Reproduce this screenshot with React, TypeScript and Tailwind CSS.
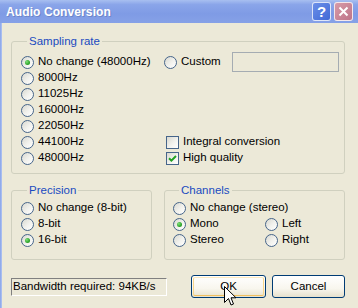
import React from "react";

function Radio({ checked = false }: { checked?: boolean }) {
  return (
    <span className="relative inline-flex h-[13px] w-[13px] shrink-0 items-center justify-center rounded-full border border-[#46658a] bg-[linear-gradient(135deg,#d8d8d0_0%,#f2f2ee_55%,#ffffff_100%)]">
      {checked && (
        <span className="h-[5px] w-[5px] rounded-full bg-[radial-gradient(circle_at_35%_35%,#7fe07a_0%,#2fa52c_60%,#1b8a1b_100%)]" />
      )}
    </span>
  );
}

function Check({ checked = false }: { checked?: boolean }) {
  return (
    <span className="inline-flex h-[13px] w-[13px] shrink-0 items-center justify-center border border-[#46658a] bg-[linear-gradient(135deg,#d8d8d0_0%,#f2f2ee_55%,#ffffff_100%)]">
      {checked && (
        <svg width="9" height="9" viewBox="0 0 9 9">
          <path d="M1 4.2 L3.4 6.6 L8 2" fill="none" stroke="#21a121" strokeWidth="2" />
        </svg>
      )}
    </span>
  );
}

function RadioRow({ label, checked = false }: { label: string; checked?: boolean }) {
  return (
    <div className="flex h-[16px] items-center gap-[4px]">
      <Radio checked={checked} />
      <span className="whitespace-nowrap">{label}</span>
    </div>
  );
}

function CheckRow({ label, checked = false }: { label: string; checked?: boolean }) {
  return (
    <div className="flex h-[16px] items-center gap-[4px] pl-[2px]">
      <Check checked={checked} />
      <span className="whitespace-nowrap">{label}</span>
    </div>
  );
}

function Group({ title, className, children }: { title: string; className: string; children: React.ReactNode }) {
  return (
    <fieldset className={"rounded-[3px] border border-[#d0d0bf] " + className}>
      <legend className="ml-[6px] px-[2px] leading-[14px] text-[#1a4bc0]">{title}</legend>
      {children}
    </fieldset>
  );
}

export default function App() {
  return (
    <div
      className="flex h-[308px] w-[358px] flex-col overflow-hidden bg-[#ece9d8] text-[11.5px] text-black"
      style={{ fontFamily: '"Liberation Sans", Arial, sans-serif' }}
    >
      {/* Title bar */}
      <div className="flex h-[23px] shrink-0 items-center justify-between bg-[linear-gradient(180deg,#a8bff0_0%,#8aa5e9_20%,#7f9be5_60%,#86a1e7_100%)] pl-[6px] pr-[5px]">
        <span className="text-[12px] font-bold tracking-[0.1px] text-white [text-shadow:1px_1px_0_#6d86c9]">
          Audio Conversion
        </span>
        <div className="flex items-center gap-[3px]">
          <div className="flex h-[19px] w-[19px] items-center justify-center rounded-[3px] border border-white/80 bg-[linear-gradient(135deg,#6b8fe8_0%,#4069d6_100%)] text-[15px] font-bold leading-none text-white">
            ?
          </div>
          <div className="flex h-[19px] w-[19px] items-center justify-center rounded-[3px] border border-white/80 bg-[linear-gradient(135deg,#d79aa8_0%,#be7589_100%)]">
            <svg width="11" height="11" viewBox="0 0 11 11">
              <path d="M1.5 1.5 L9.5 9.5 M9.5 1.5 L1.5 9.5" stroke="white" strokeWidth="2" />
            </svg>
          </div>
        </div>
      </div>

      {/* Body */}
      <div className="flex flex-1">
        <div className="w-[4px] bg-[linear-gradient(90deg,#8aa5e9_0%,#9db4ee_60%,#b9cbf3_100%)]" />
        <div className="flex flex-1 flex-col pl-[9px] pr-[13px] pt-[11px]">
          {/* Sampling rate */}
          <Group title="Sampling rate" className="h-[140px] pl-[9px] pr-[5px] pt-[6px]">
            <div className="grid grid-cols-[143px_1fr]">
              <div className="flex flex-col">
                <RadioRow label="No change (48000Hz)" checked />
                <RadioRow label="8000Hz" />
                <RadioRow label="11025Hz" />
                <RadioRow label="16000Hz" />
                <RadioRow label="22050Hz" />
                <RadioRow label="44100Hz" />
                <RadioRow label="48000Hz" />
              </div>
              <div className="flex flex-col">
                <div className="flex h-[16px] items-center">
                  <RadioRow label="Custom" />
                  <div className="ml-auto h-[20px] w-[107px] shrink-0 border border-[#a5acb2] bg-[#ece9d8]" />
                </div>
                <div className="h-[64px]" />
                <CheckRow label="Integral conversion" />
                <CheckRow label="High quality" checked />
              </div>
            </div>
          </Group>

          {/* Precision + Channels */}
          <div className="mt-[9px] flex gap-[12px]">
            <Group title="Precision" className="h-[77px] w-[141px] pl-[9px] pt-[3px]">
              <RadioRow label="No change (8-bit)" />
              <RadioRow label="8-bit" />
              <RadioRow label="16-bit" checked />
            </Group>
            <Group title="Channels" className="h-[77px] flex-1 pl-[8px] pt-[3px]">
              <RadioRow label="No change (stereo)" />
              <div className="grid grid-cols-[92px_1fr]">
                <RadioRow label="Mono" checked />
                <RadioRow label="Left" />
                <RadioRow label="Stereo" />
                <RadioRow label="Right" />
              </div>
            </Group>
          </div>

          {/* Bottom row */}
          <div className="mt-[15px] flex items-center">
            <div className="flex h-[18px] w-[156px] items-center border border-b-white border-l-[#808080] border-r-white border-t-[#808080] pl-[1px] leading-none">
              Bandwidth required: 94KB/s
            </div>
            <div className="relative ml-[24px] flex h-[23px] w-[75px] items-center justify-center rounded-[3px] border border-[#003c74] bg-[linear-gradient(180deg,#ffffff_0%,#f8f6ee_60%,#e6e1cd_100%)]">
              <div className="absolute inset-[1px] rounded-[2px] border border-b-[#f0c060] border-l-[#f8d68a] border-r-[#f8d68a] border-t-[#fdebc0]" />
              <span className="relative">OK</span>
              <svg className="absolute left-[32px] top-[10px]" width="13" height="21" viewBox="0 0 13 21">
                <path
                  d="M0.5 0.5 L0.5 16.5 L4.5 12.5 L7 19 L9.5 18 L7 11.8 L12 11.8 Z"
                  fill="white"
                  stroke="black"
                  strokeWidth="1"
                  strokeLinejoin="miter"
                />
              </svg>
            </div>
            <div className="ml-[6px] flex h-[23px] w-[73px] items-center justify-center rounded-[3px] border border-[#003c74] bg-[linear-gradient(180deg,#ffffff_0%,#f8f6ee_60%,#e6e1cd_100%)]">
              Cancel
            </div>
          </div>
        </div>
      </div>
    </div>
  );
}
